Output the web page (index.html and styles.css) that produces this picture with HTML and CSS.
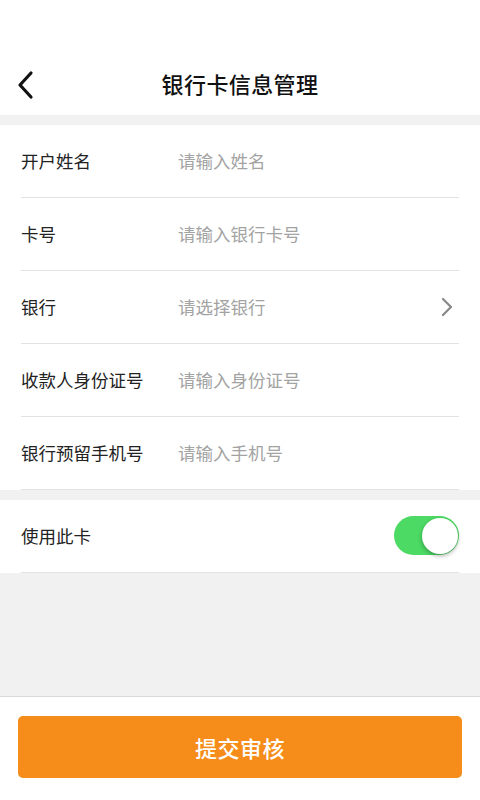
FILE: index.html
```html
<!DOCTYPE html>
<html lang="zh-CN">
<head>
<meta charset="utf-8">
<link rel="stylesheet" href="styles.css">
</head>
<body>
<div class="page">
  <div class="status"></div>
  <header class="header">
    <svg class="back" width="20" height="30" viewBox="0 0 20 30"><path d="M15 3 L4 15 L15 27" fill="none" stroke="#111" stroke-width="3.2" stroke-linecap="round" stroke-linejoin="round"/></svg>
    <h1 class="title">银行卡信息管理</h1>
  </header>
  <div class="sep"></div>
  <section class="group">
    <div class="row"><span class="label">开户姓名</span><span class="ph">请输入姓名</span></div>
    <div class="row"><span class="label">卡号</span><span class="ph">请输入银行卡号</span></div>
    <div class="row"><span class="label">银行</span><span class="ph">请选择银行</span>
      <svg class="chev" width="14" height="20" viewBox="0 0 14 20"><path d="M3 2 L11 10 L3 18" fill="none" stroke="#888" stroke-width="2.2" stroke-linecap="round" stroke-linejoin="round"/></svg>
    </div>
    <div class="row"><span class="label">收款人身份证号</span><span class="ph">请输入身份证号</span></div>
    <div class="row"><span class="label">银行预留手机号</span><span class="ph">请输入手机号</span></div>
  </section>
  <div class="sep"></div>
  <section class="group">
    <div class="row"><span class="label">使用此卡</span>
      <span class="toggle"><span class="knob"></span></span>
    </div>
  </section>
  <div class="filler"></div>
  <footer class="footer">
    <button class="submit">提交审核</button>
  </footer>
</div>
</body>
</html>
```
FILE: styles.css
```css
* { box-sizing: border-box; }
html, body { margin: 0; padding: 0; }
body {
  font-family: "Noto Sans CJK SC", "Noto Sans", sans-serif;
  background: #f1f1f1;
  color: #222;
}
.page {
  width: 480px;
  height: 800px;
  display: flex;
  flex-direction: column;
}
.status { height: 50px; background: #fff; }
.header {
  height: 65px;
  background: #fff;
  display: flex;
  align-items: center;
  justify-content: center;
  position: relative;
}
.back { position: absolute; left: 16px; top: 20px; }
.title {
  margin: 0;
  font-size: 22px;
  font-weight: 500;
  color: #111;
  letter-spacing: 0.4px;
}
.sep { height: 10px; background: #f1f1f1; }
.group { background: #fff; padding: 0 21px; }
.row {
  height: 73px;
  display: flex;
  align-items: center;
  border-bottom: 1px solid #e2e2e2;
  padding-bottom: 1px;
}
.label {
  width: 157px;
  font-size: 17.5px;
  color: #222;
}
.ph {
  flex: 1;
  font-size: 17.5px;
  color: #a3a3a3;
}
.chev { margin-right: 5px; }
.toggle {
  margin-left: auto;
  width: 65px;
  height: 39px;
  border-radius: 20px;
  background: #4cd964;
  display: flex;
  align-items: center;
  justify-content: flex-end;
  padding-right: 1px;
}
.knob {
  width: 36px;
  height: 36px;
  border-radius: 50%;
  background: #fff;
  box-shadow: 0 2px 4px rgba(0,0,0,0.3);
}
.filler { flex: 1; background: #f1f1f1; border-bottom: 1px solid #d9d9d9; }
.footer {
  height: 103px;
  background: #fff;
  padding: 19px 18px 0 18px;
}
.submit {
  width: 100%;
  height: 62px;
  border: none;
  border-radius: 5px;
  background: #f68d1a;
  color: #fff;
  font-family: "Noto Sans CJK SC", sans-serif;
  font-size: 22px;
  font-weight: 500;
  letter-spacing: 0.5px;
}
```
